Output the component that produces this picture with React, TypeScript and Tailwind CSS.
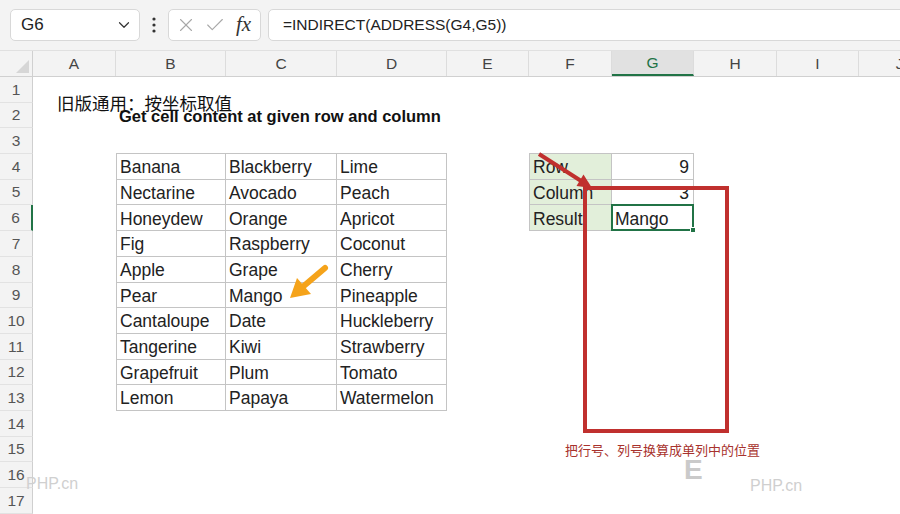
import { ChevronDown, X, Check } from "lucide-react";

const colWidths = [
  "w-[83px]",
  "w-[110px]",
  "w-[111px]",
  "w-[110px]",
  "w-[82px]",
  "w-[83px]",
  "w-[82px]",
  "w-[83px]",
  "w-[82px]",
  "w-[82px]",
];
const letters = ["A", "B", "C", "D", "E", "F", "G", "H", "I", "J"];

const fruits = [
  ["Banana", "Blackberry", "Lime"],
  ["Nectarine", "Avocado", "Peach"],
  ["Honeydew", "Orange", "Apricot"],
  ["Fig", "Raspberry", "Coconut"],
  ["Apple", "Grape", "Cherry"],
  ["Pear", "Mango", "Pineapple"],
  ["Cantaloupe", "Date", "Huckleberry"],
  ["Tangerine", "Kiwi", "Strawberry"],
  ["Grapefruit", "Plum", "Tomato"],
  ["Lemon", "Papaya", "Watermelon"],
];

const lookup = [
  ["Row", "9"],
  ["Column", "3"],
  ["Result", "Mango"],
];

const line = "border-[#c4c4c4]";

function Cell({ row, col }: { row: number; col: number }) {
  const w = colWidths[col];
  let cls = `${w} shrink-0 h-full flex items-center pl-[3px] pt-[2px] text-[17.5px] text-[#222] whitespace-nowrap`;
  let content: React.ReactNode = null;
  let extra: React.ReactNode = null;

  // fruit table B4:D13
  const inFruit = row >= 4 && row <= 13 && col >= 1 && col <= 3;
  if (inFruit) {
    content = fruits[row - 4][col - 1];
    cls += ` border-r border-b ${line}`;
    if (col === 1) cls += " border-l";
  }
  if (row === 3 && col >= 1 && col <= 3) cls += ` border-b ${line}`;

  // lookup table F4:G6
  const inLookup = row >= 4 && row <= 6 && (col === 5 || col === 6);
  if (inLookup) {
    cls += ` border-r border-b ${line}`;
    if (col === 5) {
      cls += " border-l bg-[#e2efda]";
      content = lookup[row - 4][0];
    } else {
      const v = lookup[row - 4][1];
      content = v;
      if (row !== 6) cls += " justify-end pr-[4px]";
      if (row === 6) {
        cls += " relative";
        extra = (
          <div className="absolute -left-px -top-px right-[-1px] bottom-[-1px] border-2 border-[#217346]">
            <div className="absolute right-[-4px] bottom-[-4px] w-[6px] h-[6px] bg-[#217346] border border-white" />
          </div>
        );
      }
    }
  }
  if (row === 3 && (col === 5 || col === 6)) cls += ` border-b ${line}`;

  if (row === 2 && col === 1) {
    content = (
      <span className="font-bold text-[16.5px] text-[#111] relative z-10">
        Get cell content at given row and column
      </span>
    );
  }

  return (
    <div className={cls}>
      {content}
      {extra}
    </div>
  );
}

function Row({ row }: { row: number }) {
  const selected = row === 6;
  return (
    <div className="flex h-[25.7px]">
      <div
        className={`w-[33px] shrink-0 flex items-center justify-center text-[15.5px] text-[#555] bg-[#f3f3f3] border-b border-[#e2e2e2] ${
          selected ? "border-r-2 border-r-[#217346] bg-[#e6e6e6]" : "border-r border-r-[#cfcfcf]"
        }`}
      >
        {row}
      </div>
      {colWidths.map((_, c) => (
        <Cell key={c} row={row} col={c} />
      ))}
    </div>
  );
}

export default function App() {
  const rows = Array.from({ length: 17 }, (_, i) => i + 1);
  return (
    <div className="relative w-[900px] h-[514px] overflow-hidden bg-white font-['Liberation_Sans',Arial,sans-serif]">
      {/* toolbar */}
      <div className="h-[51px] bg-[#f3f3f3] border-b border-[#e0e0e0] flex items-center pl-[10px]">
        <div className="w-[130px] shrink-0 h-[32px] rounded-[5px] border border-[#d8d8d8] bg-white flex items-center justify-between pl-[10px] pr-[6px]">
          <span className="text-[17px] text-[#222]">G6</span>
          <ChevronDown size={18} strokeWidth={1.6} className="text-[#333]" />
        </div>
        <svg width="4" height="18" viewBox="0 0 4 18" className="ml-[12px] shrink-0">
          <circle cx="2" cy="3" r="1.6" fill="#333" />
          <circle cx="2" cy="9" r="1.6" fill="#333" />
          <circle cx="2" cy="15" r="1.6" fill="#333" />
        </svg>
        <div className="ml-[12px] w-[93px] shrink-0 h-[32px] rounded-[5px] border border-[#d8d8d8] bg-white flex items-center pl-[6px]">
          <X size={22} strokeWidth={1.2} className="text-[#a8a8a8]" />
          <Check size={22} strokeWidth={1.2} className="text-[#a8a8a8] ml-[7px]" />
          <span className="ml-[10px] font-['Liberation_Serif',serif] italic text-[21px] text-[#333]">fx</span>
        </div>
        <div className="ml-[7px] w-[650px] shrink-0 h-[32px] rounded-[5px] border border-[#d8d8d8] bg-white flex items-center pl-[14px]">
          <span className="text-[15.5px] text-[#222]">=INDIRECT(ADDRESS(G4,G5))</span>
        </div>
      </div>

      {/* column header */}
      <div className="flex h-[26px] bg-[#f3f3f3] border-b border-[#d0d0d0]">
        <div className="w-[33px] shrink-0 relative border-r border-[#d0d0d0]">
          <div className="absolute right-[3px] bottom-[3px] w-0 h-0 border-l-[13px] border-l-transparent border-b-[13px] border-b-[#d6d6d6]" />
        </div>
        {colWidths.map((w, c) => (
          <div
            key={c}
            className={`${w} shrink-0 flex items-center justify-center text-[15.5px] border-r border-[#dcdcdc] ${
              c === 6 ? "bg-[#e1e1e1] text-[#217346] border-b-2 border-b-[#217346]" : "text-[#444]"
            }`}
          >
            {letters[c]}
          </div>
        ))}
      </div>

      {/* rows */}
      {rows.map((r) => (
        <Row key={r} row={r} />
      ))}

      {/* annotations */}
      <span className="absolute left-[57px] top-[90px] text-[17.5px] text-[#111] font-['Noto_Sans_CJK_SC',sans-serif] whitespace-nowrap">
        旧版通用：按坐标取值
      </span>

      <svg className="absolute inset-0 pointer-events-none" width="900" height="514">
        <rect x="585" y="188" width="142" height="243" fill="none" stroke="#c0302e" strokeWidth="4" />
        <line x1="539" y1="154" x2="582" y2="181.5" stroke="#c0302e" strokeWidth="4" />
        <polygon points="592,188 576.5,186 583.5,174.5" fill="#c0302e" />
        <line x1="325" y1="268" x2="302" y2="287.5" stroke="#f5a31a" strokeWidth="6" strokeLinecap="round" />
        <polygon points="290,298 311,294 297,278" fill="#f5a31a" />
      </svg>

      <span className="absolute left-[565px] top-[440px] text-[13px] text-[#a8322d] font-['Noto_Sans_CJK_SC',sans-serif] whitespace-nowrap">
        把行号、列号换算成单列中的位置
      </span>

      <span className="absolute left-[26px] top-[472px] text-[16px] text-[#d0d0d0]">PHP.cn</span>
      <span className="absolute left-[750px] top-[474px] text-[16px] text-[#cfcfcf]">PHP.cn</span>
      <span className="absolute left-[684px] top-[458px] font-bold text-[28px] leading-[24px] text-[#cacaca]">E</span>
    </div>
  );
}
